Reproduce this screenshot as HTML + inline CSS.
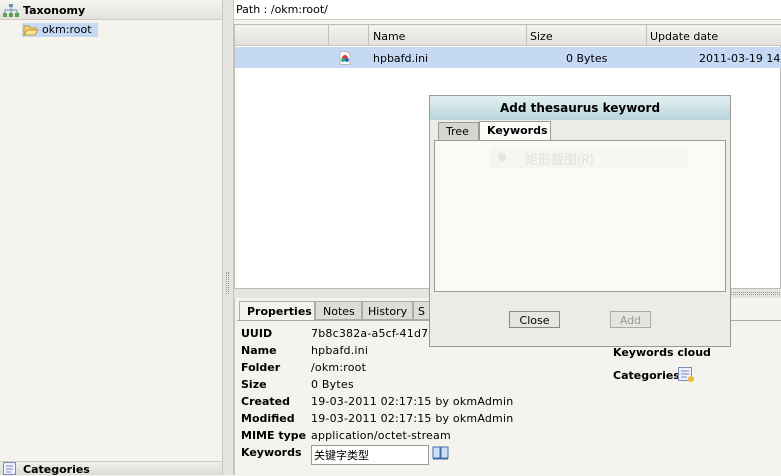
<!DOCTYPE html>
<html><head><meta charset="utf-8"><style>
*{margin:0;padding:0;box-sizing:border-box}
body{width:781px;height:475px;overflow:hidden;background:#f4f3ee;font-family:"DejaVu Sans","Liberation Sans","Noto Sans CJK SC",sans-serif;font-size:11px;color:#000;position:relative}
.a{position:absolute}
</style></head><body>
<div class="a" style="left:0;top:0;width:222px;height:20px;background:linear-gradient(#f4f4f2,#e3e2dc);border-bottom:1px solid #cfcdc5"></div>
<svg class="a" style="left:3px;top:4px" width="16" height="13"><rect x="6" y="0" width="4" height="3" fill="#6a8fb0"/><path d="M8 3v3M2 6h12M2 6v3M8 6v3M14 6v3" stroke="#6a8fb0" fill="none"/><rect x="0" y="9" width="4" height="4" fill="#5aa05a"/><rect x="6" y="9" width="4" height="4" fill="#5aa05a"/><rect x="12" y="9" width="4" height="4" fill="#5aa05a"/></svg>
<div class="a" style="left:23px;top:4px;font-weight:bold">Taxonomy</div>
<div class="a" style="left:22px;top:23px;width:76px;height:14px;background:#c5d9f5"></div>
<svg class="a" style="left:23px;top:24px" width="16" height="12"><path d="M1 2h5l1 2h6v2H4L1 11z" fill="#f3d37a" stroke="#c89a2a"/><path d="M1 11l3-5h11l-3 5z" fill="#f9e39a" stroke="#c89a2a"/></svg>
<div class="a" style="left:42px;top:23px">okm:root</div>
<div class="a" style="left:0;top:461px;width:222px;height:14px;background:linear-gradient(#f0efea,#dcdbd4);border-top:1px solid #cfcdc5"></div>
<svg class="a" style="left:3px;top:462px" width="16" height="13"><rect x="0.5" y="0.5" width="12" height="12" fill="#eef" stroke="#7a8fb5"/><path d="M3 4h7M3 7h7M3 10h5" stroke="#7a8fb5"/></svg>
<div class="a" style="left:23px;top:463px;font-weight:bold">Categories</div>
<div class="a" style="left:222px;top:0;width:12px;height:475px;background:#e5e4df;border-left:1px solid #c8c6bf;border-right:1px solid #c8c6bf"></div>
<div class="a" style="left:226px;top:272px;width:3px;height:22px;border-left:1px dotted #999;border-right:1px dotted #999"></div>
<div class="a" style="left:234px;top:0;width:547px;height:20px;background:#fff;border-bottom:1px solid #d0cec6"></div>
<div class="a" style="left:236px;top:3px">Path : /okm:root/</div>
<div class="a" style="left:234px;top:24px;width:547px;height:265px;background:#fff;border:1px solid #bbb"></div>
<div class="a" style="left:235px;top:25px;width:546px;height:21px;background:linear-gradient(#f3f3f0,#e2e1dc);border-bottom:1px solid #c9c7c0"></div>
<div class="a" style="left:328px;top:25px;width:1px;height:21px;background:#c0beb7"></div>
<div class="a" style="left:368px;top:25px;width:1px;height:21px;background:#c0beb7"></div>
<div class="a" style="left:526px;top:25px;width:1px;height:21px;background:#c0beb7"></div>
<div class="a" style="left:646px;top:25px;width:1px;height:21px;background:#c0beb7"></div>
<div class="a" style="left:373px;top:30px">Name</div>
<div class="a" style="left:530px;top:30px">Size</div>
<div class="a" style="left:650px;top:30px">Update date</div>
<div class="a" style="left:235px;top:47px;width:546px;height:21px;background:#c5d9f5"></div>
<svg class="a" style="left:338px;top:51px" width="14" height="14"><path d="M2 0.5h7l3 3V13.5H2z" fill="#fff" stroke="#bbb"/><circle cx="7" cy="7" r="3" fill="#d33"/><circle cx="5" cy="9" r="2" fill="#3a8"/><circle cx="9" cy="9" r="2" fill="#36c"/></svg>
<div class="a" style="left:373px;top:52px">hpbafd.ini</div>
<div class="a" style="left:566px;top:52px">0 Bytes</div>
<div class="a" style="left:699px;top:52px">2011-03-19 14</div>
<div class="a" style="left:234px;top:289px;width:547px;height:9px;background:#e5e4df"></div>
<div class="a" style="left:730px;top:292px;width:50px;height:3px;border-top:1px dotted #999;border-bottom:1px dotted #999"></div>
<div class="a" style="left:234px;top:298px;width:547px;height:177px;background:#f4f3ee;border-left:1px solid #c8c6bf"></div>
<div class="a" style="left:239px;top:301px;width:76px;height:20px;background:#f4f3ee;border:1px solid #aaa;border-bottom:none;font-weight:bold;padding:3px 0 0 7px">Properties</div>
<div class="a" style="left:315px;top:301px;width:47px;height:19px;background:#dddcd6;border:1px solid #aaa;padding:3px 0 0 7px">Notes</div>
<div class="a" style="left:362px;top:301px;width:51px;height:19px;background:#dddcd6;border:1px solid #aaa;padding:3px 0 0 5px">History</div>
<div class="a" style="left:413px;top:301px;width:20px;height:19px;background:#dddcd6;border:1px solid #aaa;padding:3px 0 0 4px">S</div>
<div class="a" style="left:237px;top:320px;width:544px;height:1px;background:#aaa"></div>
<div class="a" style="left:241px;top:325px;line-height:17px;font-weight:bold">UUID<br>Name<br>Folder<br>Size<br>Created<br>Modified<br>MIME type<br>Keywords</div>
<div class="a" style="left:311px;top:325px;line-height:17px;letter-spacing:0.2px">7b8c382a-a5cf-41d7-<br>hpbafd.ini<br>/okm:root<br>0 Bytes<br>19-03-2011 02:17:15 by okmAdmin<br>19-03-2011 02:17:15 by okmAdmin<br>application/octet-stream</div>
<div class="a" style="left:311px;top:445px;width:118px;height:20px;background:#fff;border:1px solid #999;padding:3px 0 0 2px;font-family:'Noto Sans CJK SC',sans-serif;font-size:11px;line-height:13px">关键字类型</div>
<svg class="a" style="left:432px;top:446px" width="17" height="14"><path d="M1 1h7v11H1zM9 1h7v11H9z" fill="#cfe0f5" stroke="#3a6fb0"/><path d="M1 13h15" stroke="#3a6fb0"/></svg>
<div class="a" style="left:613px;top:346px;font-weight:bold">Keywords cloud</div>
<div class="a" style="left:613px;top:369px;font-weight:bold">Categories</div>
<svg class="a" style="left:678px;top:367px" width="17" height="17"><rect x="0.5" y="0.5" width="13" height="13" fill="#eef" stroke="#7a8fb5"/><path d="M3 4h8M3 7h8M3 10h6" stroke="#7a8fb5"/><circle cx="13" cy="12" r="3" fill="#f0c030"/></svg>
<div class="a" style="left:429px;top:95px;width:302px;height:252px;background:#ecebe6;border:1px solid #999"></div>
<div class="a" style="left:430px;top:96px;width:300px;height:24px;background:linear-gradient(#e4f0f2,#b9d6dc);text-align:center;font-weight:bold;font-size:12px;padding-top:5px">Add thesaurus keyword</div>
<div class="a" style="left:438px;top:122px;width:41px;height:19px;background:#d6d5d0;border:1px solid #999;padding:2px 0 0 7px">Tree</div>
<div class="a" style="left:479px;top:121px;width:72px;height:20px;background:#fbfbf8;border:1px solid #999;border-bottom:none;font-weight:bold;padding:2px 0 0 7px">Keywords</div>
<div class="a" style="left:434px;top:140px;width:292px;height:152px;background:#fafaf7;border:1px solid #999"></div>
<div class="a" style="left:490px;top:147px;width:198px;height:22px;background:#f5f5f1"></div>
<div class="a" style="left:498px;top:153px;width:8px;height:8px;border-radius:4px;background:#e4e4e0"></div>
<div class="a" style="left:525px;top:149px;color:#e0e0dc;font-size:13px;font-family:'Noto Sans CJK SC',sans-serif">矩形截图(R)</div>
<div class="a" style="left:509px;top:311px;width:51px;height:17px;background:#e6e5e0;border:1px solid #888;text-align:center;padding-top:2px">Close</div>
<div class="a" style="left:610px;top:311px;width:41px;height:17px;background:#e6e5e0;border:1px solid #aaa;color:#999;text-align:center;padding-top:2px">Add</div>
</body></html>
